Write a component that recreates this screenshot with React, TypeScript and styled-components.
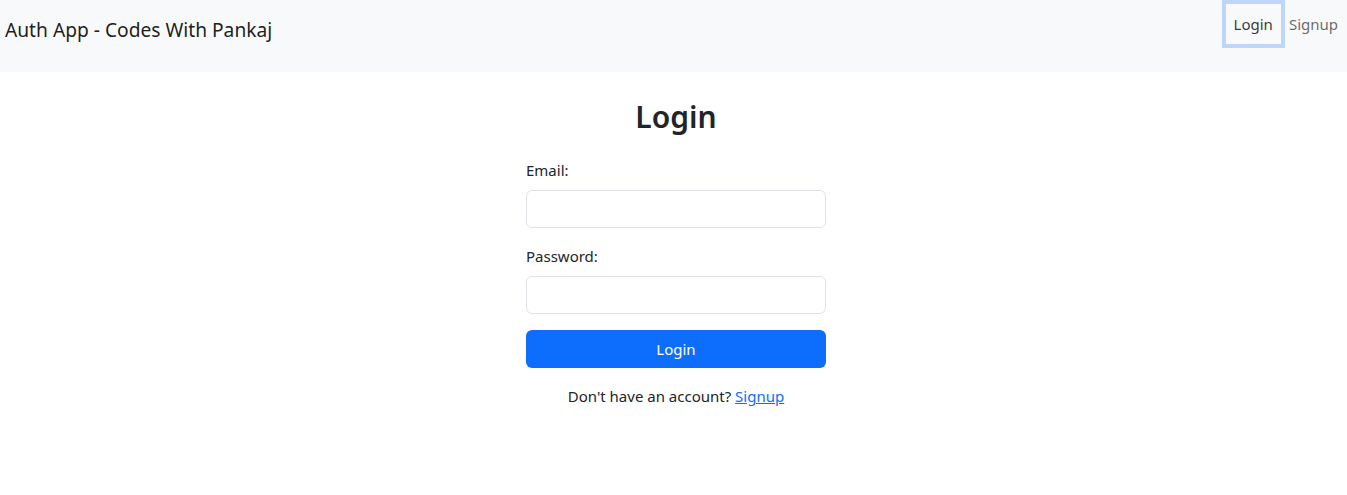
import styled, { createGlobalStyle } from 'styled-components';

const GlobalStyle = createGlobalStyle`
  * {
    box-sizing: border-box;
  }
  body {
    margin: 0;
    background: #fff;
    color: #212529;
    font-family: "Noto Sans", "Open Sans", sans-serif;
    font-size: 16px;
    line-height: 1.5;
  }
`;

const NavBar = styled.nav`
  height: 72px;
  background-color: #f8f9fa;
  display: flex;
  justify-content: space-between;
  align-items: flex-start;
  padding: 0 0 0 5px;
`;

const Brand = styled.a`
  margin-top: 15px;
  font-size: 19.2px;
  line-height: 30px;
  color: rgba(0, 0, 0, 0.9);
  text-decoration: none;
`;

const NavLinks = styled.div`
  display: flex;
  align-items: center;
  margin-top: 4px;
  padding-right: 1px;
`;

const NavLink = styled.a<{ $active?: boolean }>`
  display: block;
  padding: 8px 8px;
  font-size: 15px;
  line-height: 24px;
  color: ${(p) => (p.$active ? 'rgba(0, 0, 0, 0.8)' : 'rgba(0, 0, 0, 0.6)')};
  text-decoration: none;
  box-shadow: ${(p) => (p.$active ? '0 0 0 4px rgba(13, 110, 253, 0.25)' : 'none')};
`;

const Main = styled.main`
  display: flex;
  flex-direction: column;
  align-items: center;
  padding-left: 5px;
`;

const Title = styled.h2`
  margin: 26px 0 22px;
  font-size: 30px;
  font-weight: 600;
  line-height: 38px;
`;

const Form = styled.form`
  width: 300px;
  display: flex;
  flex-direction: column;
`;

const Field = styled.div`
  margin-bottom: 16px;
  display: flex;
  flex-direction: column;
`;

const Label = styled.label`
  font-size: 15px;
  line-height: 24px;
  margin-bottom: 8px;
`;

const Input = styled.input`
  height: 38px;
  width: 100%;
  border: 1px solid #dee2e6;
  border-radius: 6px;
  padding: 6px 12px;
  font-size: 16px;
  font-family: inherit;
  outline: none;
`;

const Button = styled.button`
  height: 38px;
  width: 100%;
  border: none;
  border-radius: 6px;
  background-color: #0d6efd;
  color: #fff;
  font-family: inherit;
  font-size: 15px;
  cursor: pointer;
`;

const Footer = styled.p`
  margin: 16px 0 0;
  text-align: center;
  font-size: 15px;
  line-height: 24px;
`;

const Link = styled.a`
  color: #0d6efd;
  text-decoration: underline;
`;

export default function App() {
  return (
    <>
      <GlobalStyle />
      <NavBar>
        <Brand href="#">Auth App - Codes With Pankaj</Brand>
        <NavLinks>
          <NavLink href="#" $active>
            Login
          </NavLink>
          <NavLink href="#">Signup</NavLink>
        </NavLinks>
      </NavBar>
      <Main>
        <Title>Login</Title>
        <Form onSubmit={(e) => e.preventDefault()}>
          <Field>
            <Label htmlFor="email">Email:</Label>
            <Input id="email" type="email" />
          </Field>
          <Field>
            <Label htmlFor="password">Password:</Label>
            <Input id="password" type="password" />
          </Field>
          <Button type="submit">Login</Button>
          <Footer>
            Don't have an account? <Link href="#">Signup</Link>
          </Footer>
        </Form>
      </Main>
    </>
  );
}
